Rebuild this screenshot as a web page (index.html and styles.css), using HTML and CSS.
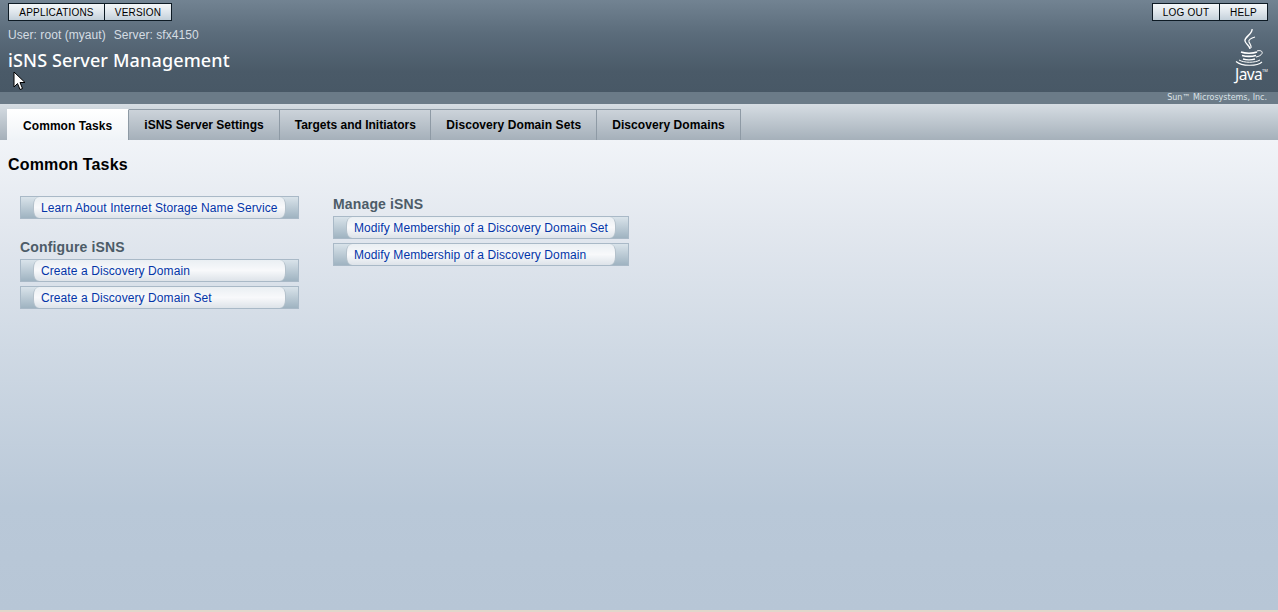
FILE: index.html
```html
<!DOCTYPE html>
<html lang="en">
<head>
<meta charset="utf-8">
<title>iSNS Server Management</title>
<link rel="stylesheet" href="styles.css">
</head>
<body>
<header class="masthead">
  <div class="mast-main">
    <div class="mast-left">
      <div class="btn-group">
        <a class="mast-btn">APPLICATIONS</a><a class="mast-btn">VERSION</a>
      </div>
      <div class="user-info"><span>User: root (myaut)</span><span>Server: sfx4150</span></div>
      <h1 class="app-title">iSNS Server Management</h1>
    </div>
    <div class="mast-right">
      <div class="btn-group">
        <a class="mast-btn">LOG OUT</a><a class="mast-btn">HELP</a>
      </div>
      <div class="java-logo">
        <svg class="java-cup" width="32" height="38" viewBox="0 0 32 38" fill="none" stroke="#fff">
          <path d="M18 0c1 5-8 8-7 12 .5 3 5 5 5 8" stroke-width="1.400"/>
          <path d="M21 8c-4 1-7 3-6 5 .5 1.500 2.500 3 2 6" stroke-width="1.100"/>
          <path d="M7 23c4 1.500 12 1.500 16 0M8 26.500c4 1 10 1 14 0M9 30c3 1 9 1 12 0" stroke-width="1.500"/>
          <path d="M23 22c3-1 6 0 5 2.500-.7 1.500-3 3-6 3.500" stroke-width="1"/>
          <path d="M5 31c5 3 16 3 21 0" stroke-width="1"/>
          <path d="M2 32.500c6 5 21 5 26 .5" stroke-width="1.100"/>
        </svg>
        <span class="java-word">Java<sup class="tm">TM</sup></span>
      </div>
    </div>
    <svg class="cursor" width="13" height="20" viewBox="0 0 13 20">
      <path d="M1 1v15l3.500-3.500 2.500 6 2.500-1-2.500-6h5z" fill="#fff" stroke="#000"/>
    </svg>
  </div>
  <div class="mast-strip"><span class="sun">Sun™ Microsystems, Inc.</span></div>
</header>
<nav class="tabs">
  <a class="tab active">Common Tasks</a>
  <a class="tab tab-even">iSNS Server Settings</a>
  <a class="tab tab-tight">Targets and Initiators</a>
  <a class="tab">Discovery Domain Sets</a>
  <a class="tab">Discovery Domains</a>
</nav>
<main class="content">
  <h2 class="page-title">Common Tasks</h2>
  <div class="columns">
    <section class="col col-left">
      <a class="task"><span class="task-inner">Learn About Internet Storage Name Service</span></a>
      <h3 class="group-title group-configure">Configure iSNS</h3>
      <a class="task"><span class="task-inner">Create a Discovery Domain</span></a>
      <a class="task"><span class="task-inner">Create a Discovery Domain Set</span></a>
    </section>
    <section class="col col-right">
      <h3 class="group-title">Manage iSNS</h3>
      <a class="task"><span class="task-inner">Modify Membership of a Discovery Domain Set</span></a>
      <a class="task"><span class="task-inner">Modify Membership of a Discovery Domain</span></a>
    </section>
  </div>
</main>
</body>
</html>
```
FILE: styles.css
```css
* { box-sizing: border-box; }
html, body { margin: 0; height: 100%; }
body {
  width: 1278px;
  height: 612px;
  overflow: hidden;
  display: flex;
  flex-direction: column;
  font-family: "Liberation Sans", Arial, sans-serif;
  font-size: 12px;
  background: #b7c6d6;
}
.masthead { flex: none; }
.mast-main {
  position: relative;
  height: 92px;
  padding: 3px 10px 0 8px;
  display: flex;
  justify-content: space-between;
  background: linear-gradient(#728392, #5a6b7a 38%, #4a5a68 78%, #485866);
}
.btn-group { display: flex; border: 1px solid #0d1a24; height: 18px; width: fit-content; }
.mast-btn {
  display: block;
  height: 16px;
  line-height: 17px;
  padding: 0;
  text-align: center;
  font-size: 10px;
  letter-spacing: .2px;
  color: #000;
  background: linear-gradient(#f4f7f9, #dfe6ec 50%, #c3d0da);
}
.mast-btn + .mast-btn { border-left: 1px solid #0d1a24; }
.mast-left .mast-btn:first-child { width: 95px; }
.mast-left .mast-btn:last-child { width: 67px; }
.mast-right .mast-btn:first-child { width: 66px; }
.mast-right .mast-btn:last-child { width: 48px; }
.user-info {
  display: flex;
  gap: 8px;
  margin-top: 7px;
  height: 14px;
  line-height: 14px;
  letter-spacing: .06px;
  color: #d5dde3;
}
.app-title {
  margin: 5px 0 0;
  font-family: "Noto Sans", sans-serif;
  font-size: 18px;
  line-height: 26px;
  font-weight: 500;
  letter-spacing: .14px;
  color: #fff;
}
.mast-right { display: flex; flex-direction: column; align-items: flex-end; }
.java-logo {
  margin-top: 8px;
  width: 34px;
  display: flex;
  flex-direction: column;
  align-items: flex-start;
  color: #fff;
}
.java-cup { display: block; }
.java-word {
  font-family: "Noto Sans", sans-serif;
  font-size: 15.500px;
  line-height: 16px;
  letter-spacing: -.6px;
  margin-top: -1px;
  margin-left: 1px;
  white-space: nowrap;
}
.tm { font-size: 4px; vertical-align: 8px; line-height: 0; letter-spacing: 0; }
.cursor { position: absolute; left: 13px; top: 71px; }
.mast-strip {
  height: 12px;
  padding-right: 11px;
  display: flex;
  justify-content: flex-end;
  align-items: center;
  background: #6b7b88;
}
.sun {
  font-family: "DejaVu Sans", sans-serif;
  font-size: 8px;
  line-height: 12px;
  color: #dbe2e7;
}
.tabs {
  flex: none;
  height: 36px;
  padding: 5px 0 0 7px;
  display: flex;
  background: linear-gradient(#d6dde3, #a5b0ba);
}
.tab {
  display: block;
  height: 31px;
  padding: 0 15px;
  line-height: 31px;
  font-weight: 700;
  letter-spacing: .07px;
  color: #000;
  border: 1px solid #8e9aa5;
  border-left: 0;
  border-bottom: 0;
  background: linear-gradient(#ccd3da, #a5b0ba);
}
.tab.tab-even { letter-spacing: 0; }
.tab.tab-tight { letter-spacing: 0; padding-right: 14.500px; }
.tab.active {
  padding: 0 16px;
  line-height: 33px;
  border: 0;
  border-top: 1px solid #fff;
  border-right: 1px solid #8e9aa5;
  background: linear-gradient(#fff, #eff3f7);
}
.content {
  flex: 1;
  padding: 0 8px;
  border-bottom: 2px solid #e2d6cb;
  background: linear-gradient(#f1f4f8, #e3e8ef 18%, #cfd9e4 45%, #b9c8d8 78%, #b7c6d6);
}
.page-title {
  margin: 16px 0 0;
  font-size: 16px;
  line-height: 18px;
  font-weight: 700;
  letter-spacing: .15px;
  color: #000;
}
.columns { display: flex; padding: 0 12px; margin-top: 22px; }
.col { display: flex; flex-direction: column; }
.col-left { width: 279px; margin-right: 34px; }
.col-right { width: 296px; }
.group-title {
  margin: 0;
  height: 20px;
  font-size: 14px;
  line-height: 16px;
  font-weight: 700;
  letter-spacing: .15px;
  color: #4d5c68;
}
.group-configure { margin-top: 20px; }
.task {
  display: block;
  height: 23px;
  padding: 0 12px;
  border: 1px solid #a9b9c7;
  background: linear-gradient(#d9e3ea, #9fb3c1);
}
.task + .task { margin-top: 4px; }
.task-inner {
  display: block;
  height: 21px;
  padding-left: 7px;
  line-height: 23px;
  letter-spacing: .09px;
  color: #0335a8;
  white-space: nowrap;
  border-left: 1px solid #b4c1cb;
  border-right: 1px solid #b4c1cb;
  border-radius: 6px / 8px;
  background: linear-gradient(#eaeff3, #f8f9fb 50%, #dde3e9);
}
```
